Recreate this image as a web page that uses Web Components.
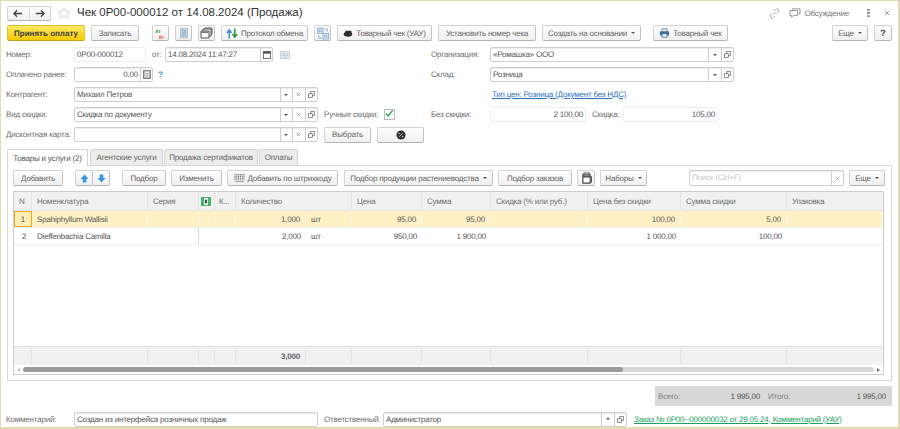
<!DOCTYPE html>
<html lang="ru">
<head>
<meta charset="utf-8">
<title>Чек</title>
<style>
  html, body { margin: 0; padding: 0; height: 100%; background: #fff; overflow: hidden; }
  body { font: 8px "Liberation Sans", Arial, sans-serif; letter-spacing: -.2px; color: #4a4a4a; text-rendering: geometricPrecision; }
</style>
</head>
<body>
<doc-window>
  <title-bar slot="title"></title-bar>
  <command-bar slot="commands"></command-bar>
  <doc-header slot="header"></doc-header>
  <tab-strip slot="tabs"></tab-strip>
  <goods-panel slot="panel"></goods-panel>
  <totals-bar slot="totals"></totals-bar>
  <footer-row slot="footer"></footer-row>
</doc-window>

<script>
const ICONS = {
  back: '<svg width="10" height="9" viewBox="0 0 11 9"><path d="M1 4.5h9M4.5 1 1 4.5 4.5 8" fill="none" stroke="#444" stroke-width="1.5"/></svg>',
  forward: '<svg width="10" height="9" viewBox="0 0 11 9"><path d="M10 4.5H1M6.5 1 10 4.5 6.5 8" fill="none" stroke="#444" stroke-width="1.5"/></svg>',
  star: '<svg width="14" height="14" viewBox="0 0 15 15"><path d="M7.5 1.2 9.4 5.6l4.7.4-3.6 3.1 1.1 4.6-4.1-2.5-4.1 2.5 1.1-4.6L.9 6l4.7-.4z" fill="#fff" stroke="#d6d6d6"/></svg>',
  dtkt: '<svg width="13" height="13" viewBox="0 0 13 13"><text x="1" y="6" font-size="5" font-weight="700" font-family="Liberation Sans" fill="#3aa54a">Ат</text><text x="5" y="12" font-size="5" font-weight="700" font-family="Liberation Sans" fill="#e0533f">Кт</text></svg>',
  list: '<svg width="8" height="12" viewBox="0 0 9 12"><rect x=".5" y=".5" width="8" height="11" fill="#c6d7e7" stroke="#a9bfd3"/><path d="M2 3h5M2 5h5M2 7h5M2 9h5" stroke="#8aa6c0"/></svg>',
  stack: '<svg width="13" height="12" viewBox="0 0 13 12"><path d="M1 4h8v7H1zM3 4V2h8v7H9M5 2V1h7v6h-1" fill="#f4f4f4" stroke="#555" stroke-width="1"/><path d="M1.5 4.5h7v1.5h-7z" fill="#777"/></svg>',
  exchange: '<svg width="12" height="13" viewBox="0 0 13 13"><path d="M3.5 12V4M1 6l2.5-3.5L6 6" fill="none" stroke="#3f8fcf" stroke-width="1.7"/><path d="M9.5 1v8M7 7l2.5 3.5L12 7" fill="none" stroke="#2f9e44" stroke-width="1.7"/></svg>',
  barcodes: '<svg width="12" height="13" viewBox="0 0 13 13"><rect x=".5" y=".5" width="6" height="6" fill="#dbe7f3" stroke="#8fb2d3"/><rect x="6.5" y="6.5" width="6" height="6" fill="#dbe7f3" stroke="#8fb2d3"/><path d="M8 1.5h3v3M5 11.5H2v-3M2.5 2v3M4.5 2v3M8.5 8v3M10.5 8v3" fill="none" stroke="#7ea7cd"/></svg>',
  register: '<svg width="10" height="7" viewBox="0 0 13 10"><path d="M3 1h8l1 3H2z" fill="#333"/><ellipse cx="6.5" cy="6" rx="6" ry="3.5" fill="#2a2a2a"/><circle cx="9.5" cy="6" r=".8" fill="#888"/></svg>',
  printer: '<svg width="11" height="10" viewBox="0 0 13 12"><path d="M3.5 4V1h6v3" fill="#fff" stroke="#3b6f96"/><rect x="1" y="4" width="11" height="5" rx="1" fill="#3b6f96"/><rect x="3.5" y="7" width="6" height="4" fill="#fff" stroke="#3b6f96"/></svg>',
  link: '<svg width="11" height="11" viewBox="0 0 13 13"><path d="M5.5 7.5 8 5M6 3.5l1.5-1.5a2.2 2.2 0 0 1 3.2 3.2L9.2 6.7M7 9.5l-1.5 1.5a2.2 2.2 0 0 1-3.2-3.2l1.5-1.5" fill="none" stroke="#999"/></svg>',
  chat: '<svg width="12" height="10" viewBox="0 0 14 12"><path d="M4 3V1h9v6h-2" fill="#fff" stroke="#888"/><path d="M1 3h9v6H5l-2 2V9H1z" fill="#fff" stroke="#888"/></svg>',
  dots: '<svg width="3" height="8" viewBox="0 0 3 9"><path d="M0 0h3v2H0zM0 3.5h3v2H0zM0 7h3v2H0z" fill="#888"/></svg>',
  close: '<svg width="6" height="6" viewBox="0 0 7 7"><path d="M1 1l5 5M6 1 1 6" stroke="#999" stroke-width="1.1"/></svg>',
  calendar: '<svg width="8" height="8" viewBox="0 0 9 9"><rect x=".5" y=".5" width="8" height="8" fill="#fff" stroke="#666"/><rect x=".5" y=".5" width="8" height="2.5" fill="#555"/></svg>',
  calc: '<svg width="8" height="9" viewBox="0 0 9 10"><rect x=".5" y=".5" width="8" height="9" fill="#bbb" stroke="#777"/><path d="M2 2.5h5" stroke="#fff"/><path d="M2 5h1M4 5h1M6 5h1M2 7h1M4 7h1M6 7h1" stroke="#fff"/></svg>',
  keyboard: '<svg width="10" height="8" viewBox="0 0 11 9"><rect x=".5" y=".5" width="10" height="8" fill="#e8eef2" stroke="#c2ced6"/><path d="M2 3h7M2 5h7M3 7h5" stroke="#b8c5ce"/></svg>',
  window: '<svg width="7" height="7" viewBox="0 0 8 8"><path d="M3 3V.5h4.5V5H5M.5 3h4.5v4.5H.5z" fill="none" stroke="#777"/></svg>',
  percent: '<svg width="10" height="10" viewBox="0 0 11 11"><circle cx="5.5" cy="5.5" r="5" fill="#333"/><path d="M3.5 7.5l4-4" stroke="#bbb"/><circle cx="3.7" cy="3.9" r=".9" fill="#bbb"/><circle cx="7.3" cy="7.1" r=".9" fill="#bbb"/></svg>',
  up: '<svg width="9" height="9" viewBox="0 0 10 10"><path d="M5 .5 9.5 5.5H7V9.5H3V5.5H.5z" fill="#3d97df"/></svg>',
  down: '<svg width="9" height="9" viewBox="0 0 10 10"><path d="M5 9.5 9.5 4.5H7V.5H3V4.5H.5z" fill="#3d97df"/></svg>',
  scan: '<svg width="11" height="10" viewBox="0 0 12 11"><path d="M1 1v7M3 1v7M5 1v7M7 1v7M9 1v7M11 1v7" stroke="#666" stroke-dasharray="1.5 .5"/><path d="M1 9.5h10" stroke="#999"/></svg>',
  tableset: '<svg width="11" height="12" viewBox="0 0 12 13"><path d="M2 3h8v9H2z" fill="#fff" stroke="#444" stroke-width="1.3"/><path d="M3 3V1h6v2M10 5h1.5v6H10" fill="none" stroke="#444"/><path d="M2 4h8v2H2z" fill="#555"/></svg>',
  kit: '<svg width="10" height="9" viewBox="0 0 11 10"><rect width="11" height="10" fill="#45b36a"/><rect x="3.5" y="1" width="4" height="8" fill="#fff"/><rect x="4.5" y="3" width="2" height="4" fill="#333"/></svg>'
};

function makeEl(cls, tag) { customElements.define(tag, cls); }

// кнопка: подпись в слоте, icon / w / caret / primary в атрибутах
class CmdButton extends HTMLElement {
  constructor() {
    super();
    const w = this.getAttribute('w');
    const icon = this.getAttribute('icon');
    this.attachShadow({ mode: 'open' }).innerHTML = `
      <style>
        :host {
          display: inline-flex; box-sizing: border-box; height: 16px;
          ${w ? `width:${w}px;` : ''} flex: none;
          align-items: center; justify-content: center; gap: 3px;
          font: 8px "Liberation Sans", Arial, sans-serif; color: #666;
          background: linear-gradient(#fdfdfd, #f0f0f0);
          border: 1px solid #d2d2d2; border-bottom-color: #b4b4b4; border-right-color: #c2c2c2;
          border-radius: 2px; white-space: nowrap;
        }
        :host([primary]) {
          background: linear-gradient(#fde964, #f4c900); border-color: #dcc036; border-bottom-color: #bfa51c;
          color: #3c3c3c; font-weight: 700; letter-spacing: 0;
        }
        .caret { width: 0; height: 0; border: 2px solid transparent; border-top: 2.5px solid #555; border-bottom: 0; margin-left: 1px; }
        svg { display: block; }
      </style>
      ${icon ? ICONS[icon] : ''}<slot></slot>${this.hasAttribute('caret') ? '<span class="caret"></span>' : ''}`;
  }
}
makeEl(CmdButton, 'cmd-button');

// поле ввода: btns = drop,clear,open / cal / calc
class FormField extends HTMLElement {
  constructor() {
    super();
    const w = this.getAttribute('w');
    const btns = (this.getAttribute('btns') || '').split(',').filter(Boolean);
    const cell = {
      drop: '<i class="b"><span class="caret"></span></i>',
      clear: `<i class="b">${ICONS.close.replace(/width="6" height="6"/, 'width="5" height="5"')}</i>`,
      open: `<i class="b">${ICONS.window}</i>`,
      cal: `<i class="b in">${ICONS.calendar}</i>`,
      calc: `<i class="b in">${ICONS.calc}</i>`
    };
    this.attachShadow({ mode: 'open' }).innerHTML = `
      <style>
        :host {
          display: inline-flex; box-sizing: border-box; height: 15px; width: ${w}px; flex: none;
          background: #fff; border: 1px solid #cfcfcf; border-radius: 2px;
          box-shadow: inset 0 1px 0 #ececec;
          font: 8px "Liberation Sans", Arial, sans-serif; color: #555;
        }
        :host([flat]) { border-color: #eeeeee; box-shadow: none; }
        .v { flex: 1; min-width: 0; padding: 0 2px; line-height: 13px; white-space: nowrap; overflow: hidden; }
        :host([right]) .v { text-align: right; }
        :host([hint]) .v { color: #c8c8c8; }
        .b { flex: none; width: 12.5px; border-left: 1px solid #cfcfcf; display: flex; align-items: center; justify-content: center; box-sizing: border-box; }
        .b.in { width: 12px; }
        .caret { width: 0; height: 0; border: 2px solid transparent; border-top: 2.5px solid #555; border-bottom: 0; }
        svg { display: block; }
      </style>
      <div class="v"><slot></slot></div>${btns.map(b => cell[b]).join('')}`;
  }
}
makeEl(FormField, 'form-field');

class TitleBar extends HTMLElement {
  constructor() {
    super();
    this.attachShadow({ mode: 'open' }).innerHTML = `
      <style>
        :host { display: flex; align-items: center; height: 24px; padding: 0 6px 0 6px; box-sizing: border-box; }
        .nav { display: flex; width: 44px; height: 15px; box-sizing: border-box; border: 1px solid #d2d2d2; border-bottom-color: #b4b4b4; border-radius: 2px; background: linear-gradient(#fdfdfd, #f0f0f0); }
        .nav span { flex: 1; display: flex; align-items: center; justify-content: center; }
        .nav span + span { border-left: 1px solid #dcdcdc; }
        .star { margin: 0 6px 0 6px; display: flex; }
        h1 { margin: 0; font: 11.5px "Liberation Sans", Arial, sans-serif; letter-spacing: 0; color: #333; white-space: nowrap; flex: 1; }
        .tools { display: flex; align-items: center; font-size: 8px; color: #777; }
        .disc { margin: 0 3px 0 9px; display: flex; }
        .dots { margin: 0 0 0 18px; display: flex; }
        .close { margin: 0 2px 0 14px; display: flex; }
      </style>
      <div class="nav"><span>${ICONS.back}</span><span>${ICONS.forward}</span></div>
      <span class="star">${ICONS.star}</span>
      <h1>Чек 0Р00-000012 от 14.08.2024 (Продажа)</h1>
      <div class="tools">
        ${ICONS.link}
        <span class="disc">${ICONS.chat}</span><span>Обсуждение</span>
        <span class="dots">${ICONS.dots}</span>
        <span class="close">${ICONS.close}</span>
      </div>`;
  }
}
makeEl(TitleBar, 'title-bar');

class CommandBar extends HTMLElement {
  constructor() {
    super();
    this.attachShadow({ mode: 'open' }).innerHTML = `
      <style>
        :host { display: flex; gap: 6px; padding: 0 6px 0 6px; height: 17px; }
        .s13 { margin-left: 7px; }
        .push { margin-left: auto; }
      </style>
      <cmd-button primary w="78">Принять оплату</cmd-button>
      <cmd-button w="48">Записать</cmd-button>
      <cmd-button class="s13" icon="dtkt" w="17"></cmd-button>
      <cmd-button icon="list" w="17"></cmd-button>
      <cmd-button icon="stack" w="17"></cmd-button>
      <cmd-button icon="exchange" w="87">Протокол обмена</cmd-button>
      <cmd-button icon="barcodes" w="17"></cmd-button>
      <cmd-button icon="register" w="95">Товарный чек (УАУ)</cmd-button>
      <cmd-button w="98">Установить номер чека</cmd-button>
      <cmd-button caret w="99">Создать на основании</cmd-button>
      <cmd-button style="margin-left:6px" icon="printer" w="75">Товарный чек</cmd-button>
      <cmd-button class="push" caret w="36">Еще</cmd-button>
      <cmd-button w="18" style="font-weight:700;color:#444;font-size:9px">?</cmd-button>`;
  }
}
makeEl(CommandBar, 'command-bar');

class DocHeader extends HTMLElement {
  constructor() {
    super();
    this.attachShadow({ mode: 'open' }).innerHTML = `
      <style>
        :host { display: flex; padding: 5px 0 0 5px; height: 107px; box-sizing: border-box; color: #6e6e6e; }
        .col { display: flex; flex-direction: column; gap: 5px; }
        .left { width: 425px; }
        .row { display: flex; align-items: center; height: 15px; white-space: nowrap; }
        .l { width: 68px; flex: none; }
        .r .l { width: 59px; }
        .gap6 { margin-left: 6px; }
        .link { color: #2d6fc0; text-decoration: underline; margin-left: 2px; }
        .q { color: #2f8fcf; font-weight: 700; margin-left: 5px; }
        .check { box-sizing: border-box; width: 11px; height: 11px; margin-left: 4px; border: 1px solid #bbb; background: #fff; display: flex; }
      </style>
      <div class="col left">
        <div class="row"><span class="l">Номер:</span><form-field flat w="72">0Р00-000012</form-field>
          <span class="gap6" style="width:13px">от:</span><form-field w="108" btns="cal">14.08.2024 11:47:27</form-field>
          <span style="margin-left:7px;display:flex">${ICONS.keyboard}</span></div>
        <div class="row"><span class="l">Оплачено ранее:</span><form-field right w="79" btns="calc">0,00</form-field><span class="q">?</span></div>
        <div class="row"><span class="l">Контрагент:</span><form-field w="244" btns="drop,clear,open">Михаил Петров</form-field></div>
        <div class="row"><span class="l">Вид скидки:</span><form-field w="244" btns="drop,clear,open">Скидка по документу</form-field>
          <span class="gap6" style="width:56px">Ручные скидки:</span>
          <span class="check"><svg width="13" height="11" viewBox="0 0 13 11" style="margin:-2px 0 0 0"><path d="M1.5 5.5 4.5 9 11 1" fill="none" stroke="#1f9a45" stroke-width="1.8"/></svg></span></div>
        <div class="row"><span class="l">Дисконтная карта:</span><form-field w="244" btns="drop,clear,open"></form-field>
          <cmd-button class="gap6" w="47">Выбрать</cmd-button>
          <cmd-button class="gap6" icon="percent" w="47"></cmd-button></div>
      </div>
      <div class="col r">
        <div class="row"><span class="l">Организация:</span><form-field w="244" btns="drop,open">«Ромашка» ООО</form-field></div>
        <div class="row"><span class="l">Склад:</span><form-field w="244" btns="drop,open">Розница</form-field></div>
        <div class="row"><span class="l"></span><span class="link">Тип цен: Розница (Документ без НДС)</span></div>
        <div class="row"><span class="l">Без скидки:</span><form-field flat right w="96">2 100,00</form-field>
          <span class="gap6" style="width:31px">Скидка:</span><form-field flat right w="95">105,00</form-field></div>
      </div>`;
  }
}
makeEl(DocHeader, 'doc-header');

class TabStrip extends HTMLElement {
  constructor() {
    super();
    const tabs = [['Товары и услуги (2)', 81, 1], ['Агентские услуги', 73], ['Продажа сертификатов', 94], ['Оплаты', 39]];
    this.attachShadow({ mode: 'open' }).innerHTML = `
      <style>
        :host { display: flex; height: 16px; padding-left: 6px; gap: 1px; position: relative; z-index: 1; box-sizing: border-box; }
        .t { box-sizing: border-box; height: 16px; border: 1px solid #d4d4d4; border-bottom: 0; background: #ececec; display: flex; align-items: center; justify-content: center; color: #666; white-space: nowrap; border-radius: 2px 2px 0 0; }
        .t.on { background: #fff; height: 17px; margin-right: 1px; color: #555; }
      </style>
      ${tabs.map(t => `<div class="t${t[2] ? ' on' : ''}" style="width:${t[1]}px">${t[0]}</div>`).join('')}`;
  }
}
makeEl(TabStrip, 'tab-strip');

class GoodsTable extends HTMLElement {
  constructor() {
    super();
    // ширины колонок: N, номенклатура, серия, значок, К..., количество, ед., цена, сумма, скидка, без скидки, сумма скидки, упаковка
    const cols = '18px 116px 51px 16px 21px 70px 46px 70px 69px 97px 93px 106px 1fr';
    const foot = ['', '', '', '', '', '3,000', '', '', '', '', '', '', ''];
    const rows = [
      ['1', 'Spahiphyllum Wallisii', '', '', '', '1,000', 'шт', '95,00', '95,00', '', '100,00', '5,00', ''],
      ['2', 'Dieffenbachia Camilla', '', '', '', '2,000', 'шт', '950,00', '1 900,00', '', '1 000,00', '100,00', '']
    ];
    const rightCols = [5, 7, 8, 10, 11];
    const rowHtml = (r, i) => r.map((v, c) =>
      `<div class="c${rightCols.includes(c) ? ' rt' : ''}${c === 0 ? ' n' : ''}${i === 0 && c === 0 ? ' cur' : ''}">${v}</div>`).join('');
    this.attachShadow({ mode: 'open' }).innerHTML = `
      <style>
        :host { display: flex; flex-direction: column; height: 184px; box-sizing: border-box; border: 1px solid #cccccc; margin: 0 1px 0 0; background: #fff; }
        .g { display: grid; grid-template-columns: ${cols}; flex: none; }
        .head { height: 18px; background: #f1f1f1; border-bottom: 1px solid #e6e6e6; box-sizing: content-box; color: #6e6e6e; }
        .head div { display: flex; align-items: center; padding: 0 5px; border-right: 1px solid #e4e4e4; white-space: nowrap; overflow: hidden; }
        .head .span2 { grid-column: span 2; }
        .head div:last-child { border-right: 0; }
        .row { height: 17px; box-sizing: border-box; border-bottom: 1px solid #eee; color: #555; }
        .row.sel { background: #fff1c6; }
        .c { display: flex; align-items: center; padding: 0 5px; white-space: nowrap; overflow: hidden; }
        .sel .c { border-right: 1px solid #fdf8e6; }
        .c.rt { justify-content: flex-end; }
        .c.n { justify-content: flex-end; padding-right: 6px; }
        .cur { box-sizing: border-box; border: 1px solid #e6a92a !important; background: #ffeeb4; }
        .plain .c:nth-child(3) { border-right: 1px solid #dcdcdc; }
        .sp { flex: 1; }
        .foot { height: 18px; background: #f1f1f1; border-top: 1px solid #dedede; color: #666; font-weight: 700; }
        .foot .c { border-right: 1px solid #e4e4e4; }
        .foot .c:last-child { border-right: 0; }
        .sb { height: 9px; flex: none; display: flex; align-items: center; padding: 0 3px; gap: 3px; }
        .sb i { width: 0; height: 0; border: 2px solid transparent; flex: none; }
        .sb .l { border-right: 3px solid #bbb; border-left: 0; }
        .sb .r { border-left: 3px solid #666; border-right: 0; }
        .tr { flex: 1; height: 5px; background: #d6d6d6; border-radius: 3px; display: flex; }
        .th { width: 70.5%; background: #9c9c9c; border-radius: 3px; }
        svg { display: block; }
      </style>
      <div class="g head">
        <div>N</div><div>Номенклатура</div><div>Серия</div><div style="padding:0 2px">${ICONS.kit}</div><div style="padding:0 4px">К...</div>
        <div class="span2">Количество</div><div>Цена</div><div>Сумма</div><div>Скидка (% или руб.)</div><div>Цена без скидки</div><div>Сумма скидки</div><div>Упаковка</div>
      </div>
      <div class="g row sel">${rowHtml(rows[0], 0)}</div>
      <div class="g row plain">${rowHtml(rows[1], 1)}</div>
      <div class="sp"></div>
      <div class="g foot">${foot.map((v, c) => `<div class="c${c === 5 ? ' rt' : ''}">${v}</div>`).join('')}</div>
      <div class="sb"><i class="l"></i><div class="tr"><div class="th"></div></div><i class="r"></i></div>`;
  }
}
makeEl(GoodsTable, 'goods-table');

class GoodsPanel extends HTMLElement {
  constructor() {
    super();
    this.attachShadow({ mode: 'open' }).innerHTML = `
      <style>
        :host { display: block; box-sizing: border-box; height: 216px; margin: 0 6px 0 6px; border: 1px solid #d8d8d8; padding: 4px 6px 0 5px; }
        .bar { display: flex; gap: 5px; height: 17px; margin-bottom: 4px; }
        .pair { display: flex; margin: 0 7px 0 7px; }
        .pair cmd-button + cmd-button { border-left: 0; }
        .search { margin-left: 37px; }
      </style>
      <div class="bar">
        <cmd-button w="50">Добавить</cmd-button>
        <div class="pair"><cmd-button icon="up" w="18"></cmd-button><cmd-button icon="down" w="17"></cmd-button></div>
        <cmd-button w="44">Подбор</cmd-button>
        <cmd-button w="51">Изменить</cmd-button>
        <cmd-button icon="scan" w="111">Добавить по штрихкоду</cmd-button>
        <cmd-button caret w="149" style="margin-left:1px">Подбор продукции растениеводства</cmd-button>
        <cmd-button w="74">Подбор заказов</cmd-button>
        <cmd-button icon="tableset" w="18"></cmd-button>
        <cmd-button caret w="47">Наборы</cmd-button>
        <form-field class="search" hint w="155" btns="clear" style="height:16px">Поиск (Ctrl+F)</form-field>
        <cmd-button caret w="36">Еще</cmd-button>
      </div>
      <goods-table></goods-table>`;
  }
}
makeEl(GoodsPanel, 'goods-panel');

class TotalsBar extends HTMLElement {
  constructor() {
    super();
    this.attachShadow({ mode: 'open' }).innerHTML = `
      <style>
        :host { display: flex; align-items: center; gap: 8px; box-sizing: border-box; width: 237px; height: 20px; margin: 5px 6px 0 auto; background: #d8d8d8; padding: 0 6px 0 3px; color: #808080; }
        .t { display: flex; justify-content: space-between; }
        .t b { font-weight: 400; color: #555; }
      </style>
      <div class="t" style="width:102px"><span>Всего:</span><b>1 995,00</b></div>
      <div class="t" style="flex:1"><span>Итого:</span><b>1 995,00</b></div>`;
  }
}
makeEl(TotalsBar, 'totals-bar');

class FooterRow extends HTMLElement {
  constructor() {
    super();
    this.attachShadow({ mode: 'open' }).innerHTML = `
      <style>
        :host { display: flex; align-items: center; height: 16px; margin-top: 5px; padding-left: 5px; color: #6e6e6e; white-space: nowrap; }
        .l { width: 68px; flex: none; }
        .m { margin-left: 6px; width: 59px; flex: none; }
        a { color: #18a25e; text-decoration: underline; margin-left: 7px; }
      </style>
      <span class="l">Комментарий:</span>
      <form-field w="244">Создан из интерфейса розничных продаж</form-field>
      <span class="m">Ответственный:</span>
      <form-field w="244" btns="drop,open">Администратор</form-field>
      <a>Заказ № 0Р00--000000032 от 29.05.24, Комментарий (УАУ)</a>`;
  }
}
makeEl(FooterRow, 'footer-row');

class DocWindow extends HTMLElement {
  constructor() {
    super();
    this.attachShadow({ mode: 'open' }).innerHTML = `
      <style>
        :host { display: flex; flex-direction: column; box-sizing: border-box; width: 900px; height: 429px; background: #fff; border: 1px solid #e3dcae; border-width: 1px 2px 2px 1px; overflow: hidden; }
      </style>
      <slot name="title"></slot><slot name="commands"></slot><slot name="header"></slot>
      <slot name="tabs"></slot><slot name="panel"></slot><slot name="totals"></slot><slot name="footer"></slot>`;
  }
}
makeEl(DocWindow, 'doc-window');
</script>
</body>
</html>
